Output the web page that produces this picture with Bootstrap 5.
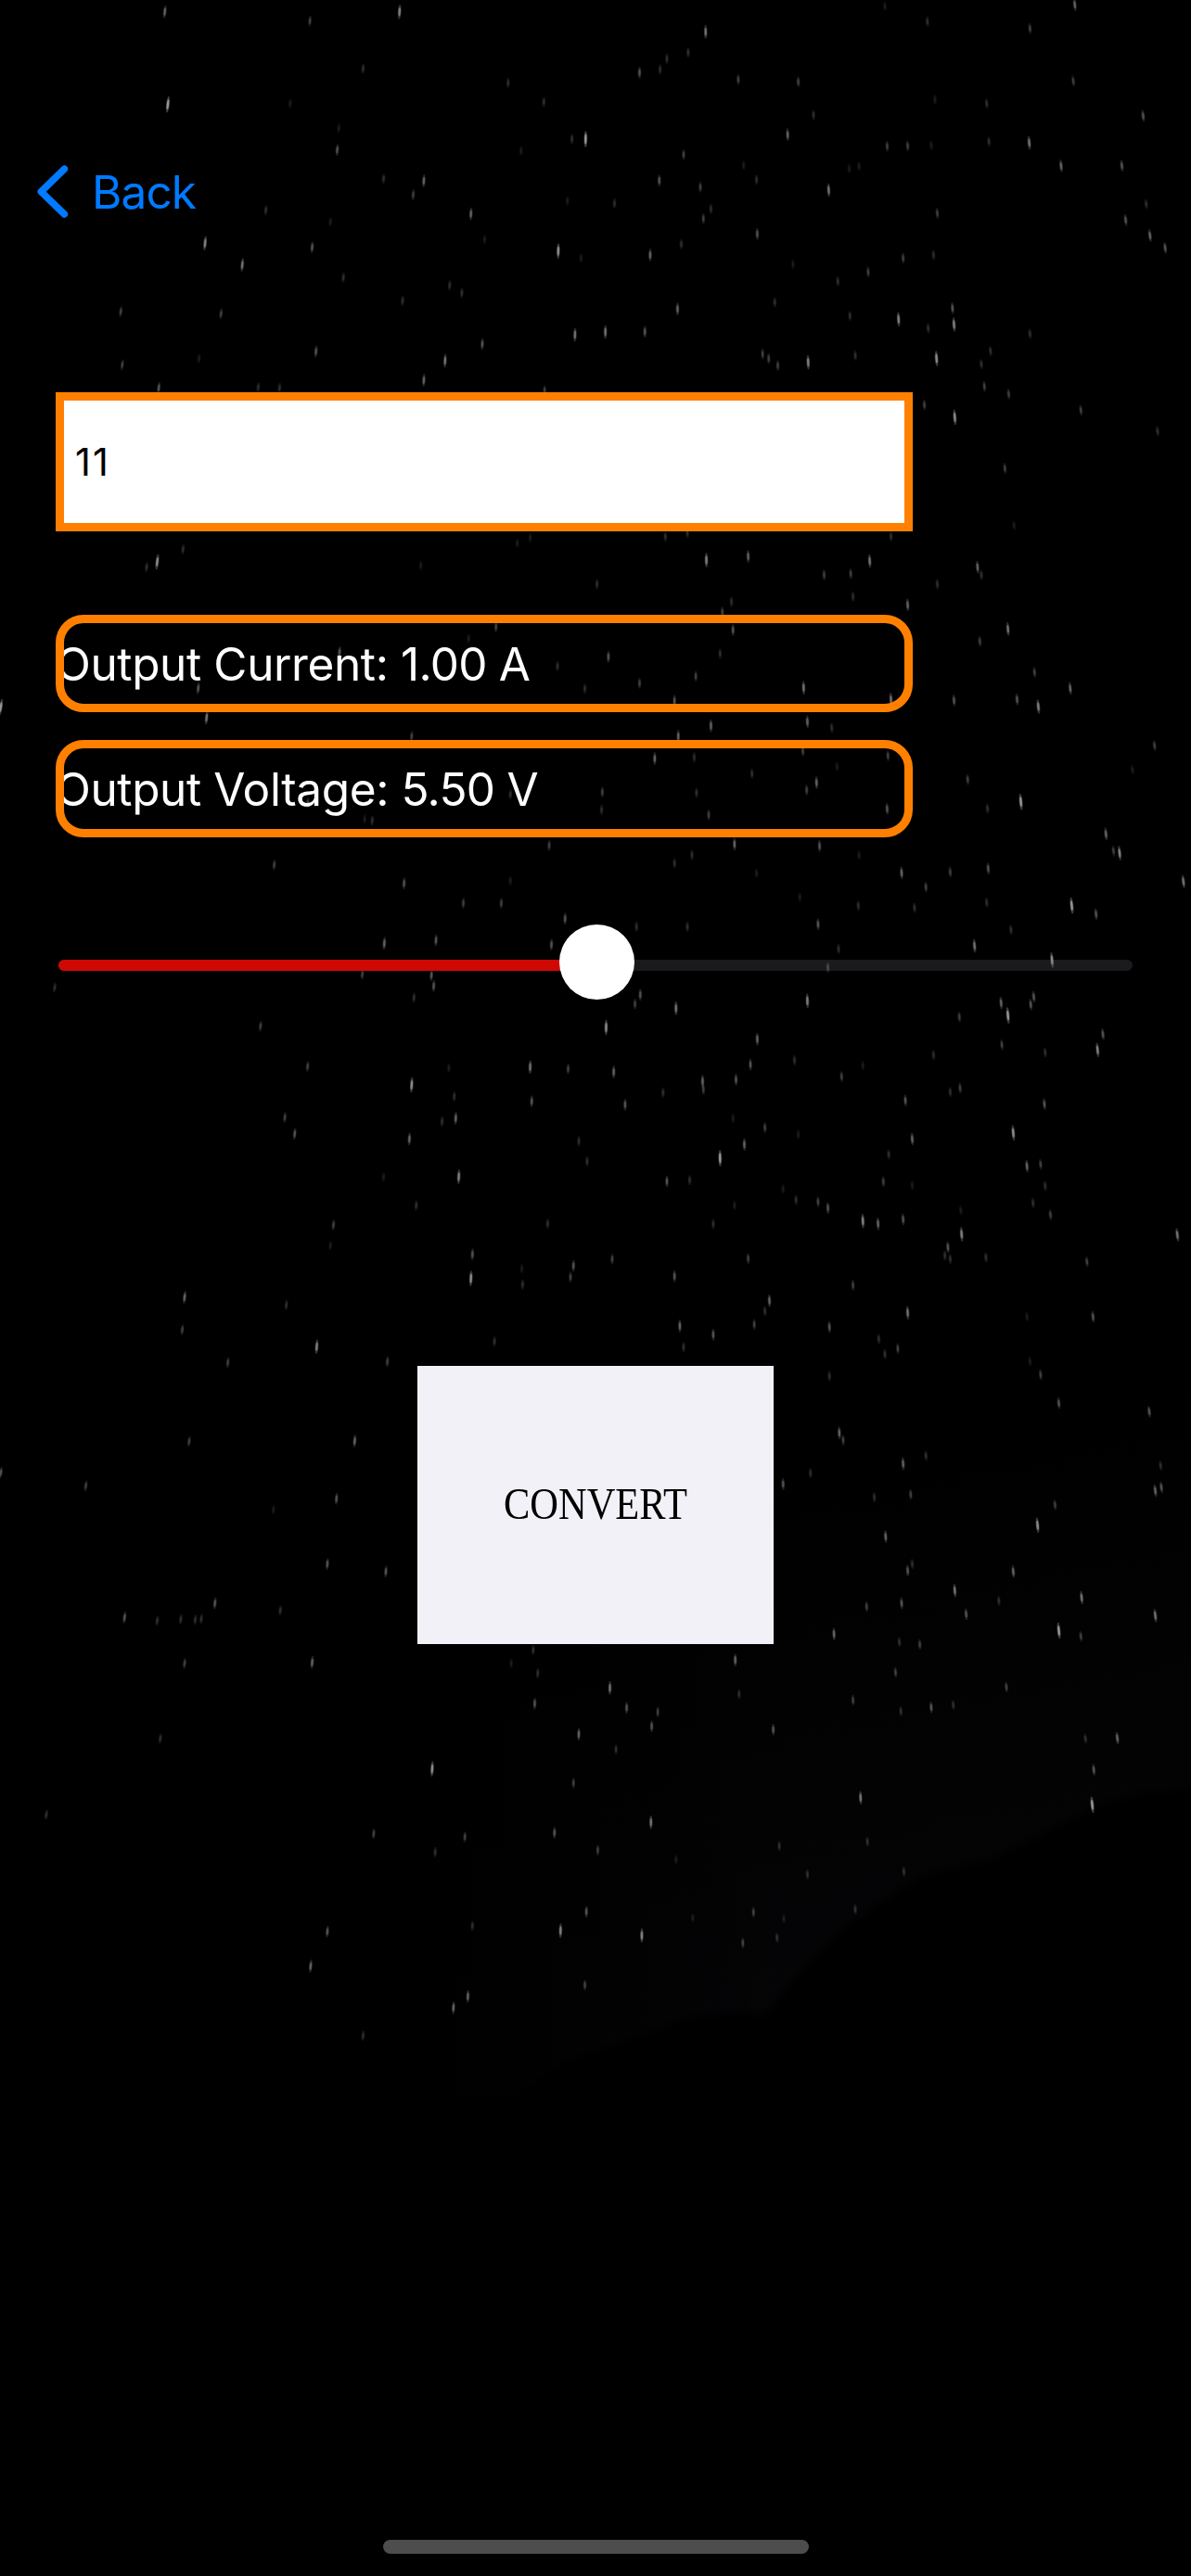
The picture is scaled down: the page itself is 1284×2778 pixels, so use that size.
<!DOCTYPE html>
<html lang="en">
<head>
<meta charset="utf-8">
<meta name="viewport" content="width=device-width, initial-scale=1">
<title>Converter</title>
<link href="https://cdn.jsdelivr.net/npm/bootstrap@5.3.0/dist/css/bootstrap.min.css" rel="stylesheet">
<style>
body{background:#000;font-family:Inter,"Liberation Sans",sans-serif;color:#fff}
.screen{height:2778px;padding:165px 60px 0;overflow:hidden}
.sky{position:absolute;inset:0;width:1284px;height:2778px}
.back-link{height:84px;margin-left:-20px;color:#007aff;font-size:49.5px;line-height:84px;gap:25px}
.back-link svg{width:34px;height:58px}
.back-link span{letter-spacing:-.9px}
.volts{width:924px;height:150px;margin-top:174px;border:9px solid #ff8000;border-radius:0;background:#fff;color:#000;font-size:41.5px;padding:0 0 0 12px;letter-spacing:2px}
.volts:focus{box-shadow:none}
.readout{width:924px;height:105px;font-size:49.5px;line-height:107px;letter-spacing:-.38px;white-space:nowrap}
.readout b{font-weight:400;letter-spacing:-.75px}
.readout::after{content:"";position:absolute;inset:0;border:9px solid #ff8000;border-radius:30px}
.readouts{margin-top:90px;gap:30px}
.slider{height:81px;margin-top:94px;padding:0 3px}
.rail{height:12px;top:38px;left:3px;right:3px;border-radius:6px;background:rgba(118,118,128,.22);overflow:hidden}
.rail-fill{height:12px;background:linear-gradient(90deg,#cf0804 94%,#b80603)}
.knob{width:81px;height:81px;left:543px;top:0;background:#fff}
.convert{width:384px;height:300px;margin-top:395px;border:0;border-radius:0;background:#f2f1f7;color:#000;font-family:"Liberation Serif",serif;font-size:48px}
.convert:hover{background:#f2f1f7;color:#000}
.convert span{display:block;margin-top:-2px;transform:scaleX(.885)}
.home-bar{width:459px;height:15px;margin-bottom:24px;background:#4d4d4d}
</style>
</head>
<body>
<main class="screen position-relative d-flex flex-column align-items-start">
  <svg class="sky" viewBox="0 0 1284 2778" aria-hidden="true">
    <defs>
      <linearGradient id="glow" x1=".25" y1="0" x2=".6" y2="1">
        <stop offset=".2" stop-color="#000"/><stop offset="1" stop-color="#050507"/>
      </linearGradient>
      <linearGradient id="shade" gradientUnits="userSpaceOnUse" x1="440" y1="0" x2="860" y2="0">
        <stop offset="0" stop-color="#000"/><stop offset="1" stop-color="#000" stop-opacity="0"/>
      </linearGradient>
      <filter id="soft"><feGaussianBlur stdDeviation="4"/></filter>
    </defs>
    <rect y="1480" width="1284" height="780" fill="url(#glow)"/>
    <rect y="1480" width="1284" height="800" fill="url(#shade)"/>
    <path filter="url(#soft)" fill="#000" d="M-20 2270 H540 L610 2222 L680 2200 L740 2175 L790 2170 L825 2172 L860 2130 L915 2075 L960 2045 L1000 2020 L1070 2005 L1130 1975 L1185 1945 L1240 1932 L1310 1928 V2300 H-20Z"/>
    <g id="stars"></g>
  </svg>

  <a href="#" class="back-link position-relative d-flex align-items-center text-decoration-none">
    <svg viewBox="0 0 34 58" fill="none" stroke="#007aff" stroke-width="7.5" stroke-linecap="round" stroke-linejoin="round"><path d="M29.4 4.2 4.3 28.7 29.4 53"/></svg>
    <span>Back</span>
  </a>

  <input class="volts form-control position-relative" type="text" value="11" aria-label="Input voltage">

  <div class="readouts d-flex flex-column">
    <div class="readout position-relative"><span>Output Current: <b>1.00 A</b></span></div>
    <div class="readout position-relative"><span>Output Voltage: <b>5.50 V</b></span></div>
  </div>

  <div class="slider position-relative w-100">
    <div class="rail position-absolute"><div class="rail-fill" style="width:50%"></div></div>
    <div class="knob position-absolute rounded-circle"></div>
  </div>

  <button class="convert btn position-relative align-self-center" type="button"><span>CONVERT</span></button>

  <div class="home-bar position-relative rounded-pill mt-auto align-self-center"></div>
</main>
<script>
// Star field, one band per stretch of sky: [x, y, brightness] in band units.
const bands = [
 {top:0, sx:1284/1568, sy:1/3, stars:[[217,38,5],[408,68,3],[526,38,7],[929,103,6],[1415,15,5],[1356,92,3],[1221,70,2],[1165,20,1],[906,170,2],[878,190,2],[842,235,4],[869,225,2],[478,222,2],[669,268,2],[972,257,3],[1051,265,3],[1413,262,3],[221,338,9],[382,335,1],[716,330,2],[1231,322,1],[1299,335,2],[1071,372,2],[1505,375,4],[446,415,1],[444,485,4],[753,450,2],[771,450,9],[1037,436,5],[1355,462,6],[1302,458,2],[1168,473,3],[1195,472,3],[1226,470,1],[686,488,1],[900,500,3],[558,585,5],[505,578,2],[1397,537,5],[1477,536,4],[979,535,1],[1118,546,1],[1131,538,1],[868,584,4],[922,605,3],[996,582,2],[1091,615,6],[544,630,3],[809,658,2],[747,650,1],[350,680,2],[620,692,5],[1234,690,3],[936,676,2],[926,707,3],[1482,712,4],[1509,660,2],[435,718,1],[270,787,7],[411,800,4],[638,775,1],[735,812,8],[997,757,4],[1514,762,5],[1534,802,4],[319,857,6],[856,825,5],[765,835,1],[897,790,2],[1189,835,3],[1229,825,2],[1044,855,1],[1143,880,3],[452,898,2],[592,923,2],[608,948,2],[530,973,2],[1103,910,2],[892,1000,5],[1254,997,4],[159,1008,3],[291,1015,3],[1020,978,2],[1119,1022,2],[1183,1033,7],[1256,1050,7],[797,1074,6],[849,1073,4],[757,1083,6],[1356,1080,2],[1222,1062,2],[635,1113,4],[416,1137,4],[586,1167,6],[1064,1172,7],[1233,1160,8],[1004,1145,3],[1012,1160,3],[1024,1183,3],[1126,1150,2],[1304,1136,2],[161,1180,3],[262,1160,1],[1292,1178,2],[558,1230,5],[209,1255,4],[340,1253,2],[1296,1250,3]]},
 {top:400, sx:1284/1568, sy:1/3, stars:[[368,55,2],[717,64,3],[1328,75,3],[1217,110,3],[1257,150,8],[1423,127,3],[1524,195,2],[1323,315,3],[1335,500,1],[876,536,2],[905,525,2],[698,540,1],[681,557,1],[1173,535,2],[241,577,2],[207,618,8],[193,635,2],[554,630,1],[930,612,7],[985,600,5],[1145,615,6],[1085,660,3],[1120,656,3],[1287,635,5],[1292,660,2],[786,690,2],[1234,690,2],[963,747,2],[1123,730,2],[1195,757,5],[951,780,3],[653,828,3],[965,838,4],[1327,835,6],[617,866,1],[1290,875,3],[447,910,4],[801,925,4],[948,915,2],[734,955,2]]},
 {top:720, sx:1284/1568, sy:1/3, stars:[[1,128,9],[261,67,4],[770,68,2],[842,50,3],[916,28,3],[1362,15,3],[1058,65,6],[888,107,4],[1173,103,6],[1256,106,4],[1339,103,4],[1367,126,7],[1409,67,5],[272,162,6],[1063,175,5],[936,188,5],[893,222,5],[1095,195,2],[542,222,3],[1057,270,3],[862,294,5],[914,290,2],[1169,285,3],[990,343,2],[1102,320,1],[1075,372,5],[1062,396,3],[1274,362,3],[793,403,3],[917,405,2],[405,438,3],[672,410,2],[1344,434,9],[1168,457,4],[1491,330,1],[1520,252,3],[792,460,2],[933,476,3],[1300,456,2],[480,490,1],[490,495,2],[1456,538,5],[967,571,5],[723,575,3],[1079,577,4],[1466,593,3],[1474,600,7],[911,606,2],[888,633,2],[361,638,3],[532,698,4],[1131,607,1],[1187,664,5],[1251,661,3],[1301,650,4],[996,665,1],[1219,710,3],[1558,692,6],[672,690,1],[1053,742,1],[610,762,3],[660,762,3],[1299,760,2],[1411,770,9],[1443,797,4],[1130,770,2],[1204,777,2],[744,812,4],[1077,830,4],[905,838,2],[838,838,2],[506,892,5],[574,882,4],[726,896,4],[1283,900,6],[1331,848,2],[1104,910,2],[1385,946,8],[1090,970,3],[477,992,3],[568,995,4],[571,1030,4],[72,1035,2],[545,1068,2],[843,1058,4],[1063,1078,7],[836,1088,3],[890,1102,6],[1361,1065,4],[1318,1085,5],[1357,1090,4],[1327,1125,9],[1263,1130,3]]},
 {top:1080, sx:1284/1568, sy:1/3, stars:[[343,80,3],[798,84,8],[997,122,5],[1452,106,4],[1445,157,7],[1319,140,3],[1376,165,2],[1229,173,2],[1046,190,2],[988,204,4],[405,210,3],[698,212,6],[748,218,3],[808,228,5],[591,215,1],[1136,207,1],[1108,243,3],[542,270,8],[925,258,5],[969,253,4],[926,284,3],[873,295,2],[1251,293,2],[1264,280,3],[598,307,2],[700,323,4],[1192,320,4],[1375,332,4],[823,334,4],[375,375,3],[600,378,5],[582,388,2],[388,428,4],[965,378,1],[1007,408,3],[1051,430,1],[539,445,5],[762,452,2],[980,463,5],[1201,445,5],[1334,425,8],[1170,495,2],[773,517,2],[948,507,9],[1352,533,5],[1370,527,3],[604,567,7],[878,582,4],[908,578,2],[505,568,1],[1163,583,3],[1201,595,1],[1376,597,2],[1031,607,1],[1048,642,2],[1077,648,3],[1090,668,4],[967,660,1],[1360,652,2],[548,660,2],[1383,690,3],[1265,676,1],[439,723,3],[721,719,2],[939,720,2],[1136,710,7],[1156,719,5],[1189,705,4],[1266,753,7],[1550,755,6],[435,790,1],[622,818,4],[806,833,3],[985,832,3],[1248,795,4],[1244,822,2],[1251,833,2],[1298,828,2],[1431,842,3],[755,855,4],[751,892,3],[687,865,1],[620,896,8],[688,916,2],[888,889,4],[1123,918,3],[243,957,5],[377,982,2],[1013,968,5],[1007,1002,2],[1195,1007,6],[1439,1020,4],[240,1062,3],[1352,1020,1],[895,1050,5],[993,1045,3],[1092,1053,4],[939,1078,4],[651,1100,2],[417,1117,7],[1157,1092,2],[1182,1123,3],[900,1118,2],[1165,1141,2],[300,1168,3],[510,1165,3],[1356,1165,1]]},
 {top:1480, sx:1284/1568, sy:800/1568, stars:[[1092,8,2],[1370,5,3],[1394,65,4],[1513,83,4],[249,146,3],[467,145,5],[1105,128,5],[1110,143,3],[1189,193,5],[1219,176,2],[1,212,4],[1067,213,2],[113,240,3],[1031,236,4],[1528,197,2],[1521,250,5],[1529,243,4],[1151,264,2],[1199,258,3],[443,267,4],[360,290,1],[1389,280,3],[1366,323,8],[1166,347,5],[431,405,4],[508,421,4],[1201,405,2],[1195,419,4],[1334,421,5],[1257,461,6],[1424,476,6],[283,488,4],[369,503,2],[1141,495,3],[1187,488,4],[1272,511,4],[1521,514,6],[1315,483,2],[164,518,4],[207,525,2],[238,522,2],[257,523,2],[265,521,2],[1098,553,5],[1394,546,9],[1423,558,3],[1184,570,2],[1211,575,3],[411,613,5],[243,615,3],[702,587,2],[968,608,5],[708,636,2],[673,615,1],[1179,634,3],[803,667,6],[1325,665,3],[704,700,4],[825,709,4],[1123,693,3],[973,680,2],[1226,708,4],[1186,716,2],[1255,703,2],[866,718,3],[858,748,4],[1018,755,4],[762,765,5],[1471,773,5],[1429,774,2],[211,774,2],[811,797,2],[569,838,8],[1440,840,4],[1438,914,9],[755,868,3],[1133,899,6],[857,951,6],[61,935,2],[492,975,3],[612,982,3],[730,973,4],[1142,992,2],[787,1010,3],[573,1014,2],[1026,1001,2],[890,1030,1],[1190,1055,2],[1063,1061,2],[1126,1135,2],[772,1140,4],[992,1141,3],[1032,1155,1],[912,1153,1],[738,1180,7],[845,1190,7],[431,1182,4],[622,1170,2],[978,1206,3],[1023,1195,2],[409,1255,5],[770,1295,3],[616,1319,5],[597,1343,5],[478,1402,2]]}
];
const NS = 'http://www.w3.org/2000/svg', field = document.getElementById('stars');
for (const b of bands) for (const [x, y, m] of b.stars) {
  const cx = x * b.sx, cy = b.top + y * b.sy;
  const draw = (rx, ry, o, c) => {
    const e = document.createElementNS(NS, 'ellipse');
    e.setAttribute('cx', cx); e.setAttribute('cy', cy);
    e.setAttribute('rx', rx); e.setAttribute('ry', ry);
    e.setAttribute('fill', c); e.setAttribute('opacity', o);
    e.setAttribute('transform', `rotate(${(cx - 700) / -80} ${cx} ${cy})`);
    field.append(e);
  };
  draw(1.9, 4.5 + m * .5, .04 + m * .03, '#c4c4cc');
  draw(1.2, 2.5 + m * .32, m * .058, '#e8e8ec');
}
</script>
<script src="https://cdn.jsdelivr.net/npm/bootstrap@5.3.0/dist/js/bootstrap.bundle.min.js"></script>
</body>
</html>
